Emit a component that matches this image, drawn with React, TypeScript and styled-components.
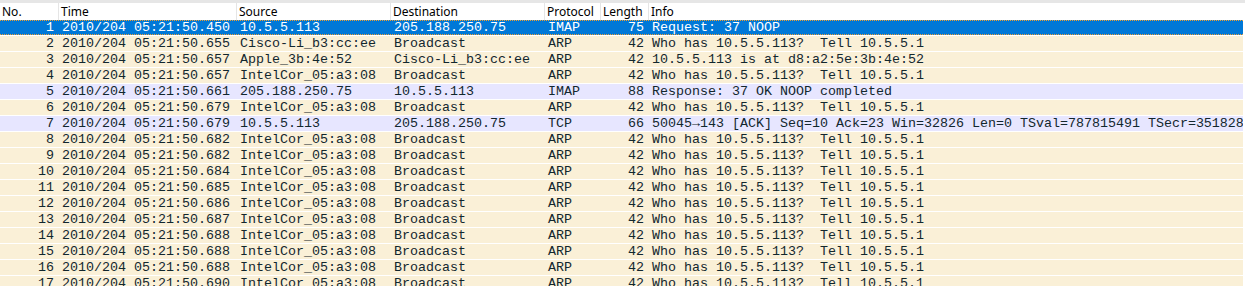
import React from 'react';
import styled, { createGlobalStyle } from 'styled-components';

const GlobalStyle = createGlobalStyle`
	html, body {
		margin: 0;
		padding: 0;
		background: #ffffff;
	}
`;

type Packet = {
	no: number;
	time: string;
	src: string;
	dst: string;
	proto: string;
	len: number;
	info: string;
	kind: 'arp' | 'tcp';
};

const WHO = 'Who has 10.5.5.113?  Tell 10.5.5.1';
const arp = (no: number, time: string, src = 'IntelCor_05:a3:08', dst = 'Broadcast', info = WHO): Packet => ({
	no,
	time: '2010/204 05:21:50.' + time,
	src,
	dst,
	proto: 'ARP',
	len: 42,
	info,
	kind: 'arp'
});

const packets: Packet[] = [
	{ no: 1, time: '2010/204 05:21:50.450', src: '10.5.5.113', dst: '205.188.250.75', proto: 'IMAP', len: 75, info: 'Request: 37 NOOP', kind: 'tcp' },
	arp(2, '655', 'Cisco-Li_b3:cc:ee'),
	arp(3, '657', 'Apple_3b:4e:52', 'Cisco-Li_b3:cc:ee', '10.5.5.113 is at d8:a2:5e:3b:4e:52'),
	arp(4, '657'),
	{ no: 5, time: '2010/204 05:21:50.661', src: '205.188.250.75', dst: '10.5.5.113', proto: 'IMAP', len: 88, info: 'Response: 37 OK NOOP completed', kind: 'tcp' },
	arp(6, '679'),
	{
		no: 7,
		time: '2010/204 05:21:50.679',
		src: '10.5.5.113',
		dst: '205.188.250.75',
		proto: 'TCP',
		len: 66,
		info: '50045\u2192143 [ACK] Seq=10 Ack=23 Win=32826 Len=0 TSval=787815491 TSecr=351828',
		kind: 'tcp'
	},
	arp(8, '682'),
	arp(9, '682'),
	arp(10, '684'),
	arp(11, '685'),
	arp(12, '686'),
	arp(13, '687'),
	arp(14, '688'),
	arp(15, '688'),
	arp(16, '688'),
	arp(17, '690')
];

const cols = '58px 178px 154px 154px 56px 48px 1fr';

const Wrap = styled.div`
	width: 1245px;
	height: 286px;
	overflow: hidden;
	background: #ffffff;
	border-top: 3px solid #e6e6e6;
	box-sizing: border-box;
	padding-right: 2px;
`;

const Header = styled.div`
	display: grid;
	grid-template-columns: ${cols};
	height: 17px;
	background: #ffffff;
	font-family: 'Noto Sans', 'Open Sans', sans-serif;
	font-size: 12px;
	color: #000000;
`;

const HeadCell = styled.div<{ first?: boolean }>`
	display: flex;
	align-items: center;
	padding-left: 2px;
	border-left: ${(p) => (p.first ? 'none' : '1px solid #e5e5e5')};
	white-space: nowrap;
	overflow: hidden;
	line-height: 17px;
`;

const Row = styled.div<{ kind: 'arp' | 'tcp'; selected?: boolean }>`
	display: grid;
	grid-template-columns: ${cols};
	height: 15px;
	margin-bottom: 1px;
	box-sizing: border-box;
	background: ${(p) => (p.selected ? '#0078d7' : p.kind === 'arp' ? '#faf0d7' : '#e7e6ff')};
	color: ${(p) => (p.selected ? '#ffffff' : '#12272e')};
	border-top: ${(p) => (p.selected ? '1px dotted #f0a030' : 'none')};
	border-bottom: ${(p) => (p.selected ? '1px dotted #f0a030' : 'none')};
	font-family: 'Liberation Mono', 'DejaVu Sans Mono', monospace;
	font-size: 13.33px;
	line-height: ${(p) => (p.selected ? '13px' : '15px')};
`;

const Cell = styled.div<{ right?: boolean }>`
	padding: 0 4px 0 4px;
	text-align: ${(p) => (p.right ? 'right' : 'left')};
	white-space: pre;
	overflow: hidden;
`;

export default function App() {
	return (
		<>
			<GlobalStyle />
			<Wrap>
				<Header>
					<HeadCell first>No.</HeadCell>
					<HeadCell>Time</HeadCell>
					<HeadCell>Source</HeadCell>
					<HeadCell>Destination</HeadCell>
					<HeadCell>Protocol</HeadCell>
					<HeadCell>Length</HeadCell>
					<HeadCell>Info</HeadCell>
				</Header>
				{packets.map((p) => (
					<Row key={p.no} kind={p.kind} selected={p.no === 1}>
						<Cell right>{p.no}</Cell>
						<Cell>{p.time}</Cell>
						<Cell>{p.src}</Cell>
						<Cell>{p.dst}</Cell>
						<Cell>{p.proto}</Cell>
						<Cell right>{p.len}</Cell>
						<Cell>{p.info}</Cell>
					</Row>
				))}
			</Wrap>
		</>
	);
}
